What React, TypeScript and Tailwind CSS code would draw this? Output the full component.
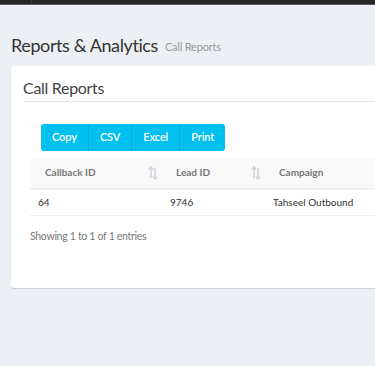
import React from 'react';

const SortIcon: React.FC = () => (
  <svg width="10" height="14" viewBox="0 0 10 14" className="text-gray-300">
    <path d="M3 1v11M0.8 3.5L3 1l2.2 2.5" stroke="currentColor" strokeWidth="1.6" fill="none" />
    <path d="M7 13V2M4.8 10.5L7 13l2.2-2.5" stroke="currentColor" strokeWidth="1.6" fill="none" />
  </svg>
);

const App: React.FC = () => {
  const buttons = ['Copy', 'CSV', 'Excel', 'Print'];

  return (
    <div className="w-[375px] h-[366px] overflow-hidden bg-[#ecf0f5] font-['Lato',sans-serif]">
      <div className="h-[5px] bg-[#262626] border-b border-[#5c5c5c] flex">
        <div className="w-[32px] border-r border-[#3a3a3a]" />
      </div>

      <div className="pl-[11px] pt-[28px] flex items-end gap-[7px]">
        <h1 className="text-[18px] leading-[24px] tracking-[-0.4px] text-[#333]">Reports &amp; Analytics</h1>
        <span className="text-[11px] leading-[20px] tracking-[-0.2px] text-[#999]">Call Reports</span>
      </div>

      <div className="ml-[11px] mt-[9px] w-[420px] h-[222px] bg-white rounded-[3px] shadow-[0_1px_1px_rgba(0,0,0,0.15)]">
        <div className="mx-[12px] pt-[11px] pb-[3px] border-b border-[#e5e5e5]">
          <h3 className="text-[16px] leading-[21px] tracking-[-0.3px] text-[#444]">Call Reports</h3>
        </div>

        <div className="pl-[19px] pr-0 pt-[21px]">
          <div className="ml-[11px] inline-flex rounded-[3px] overflow-hidden bg-[#00c0ef]">
            {buttons.map((b, i) => (
              <button
                key={b}
                className={`h-[27px] px-[11px] text-[11px] tracking-[-0.1px] font-semibold text-white ${i > 0 ? 'border-l border-[#00acd6]' : ''}`}
              >
                {b}
              </button>
            ))}
          </div>

          <table className="mt-[7px] w-[400px] text-left text-[10px]">
            <thead>
              <tr className="bg-[#f9f9f9] border-b-2 border-[#f0f0f0]">
                <th className="w-[132px] h-[31px] pl-[15px] font-bold text-[#777]">
                  <div className="flex items-center justify-between pr-[4px]">
                    <span>Callback ID</span>
                    <SortIcon />
                  </div>
                </th>
                <th className="w-[103px] pl-[14px] font-bold text-[#777]">
                  <div className="flex items-center justify-between pr-[4px]">
                    <span>Lead ID</span>
                    <SortIcon />
                  </div>
                </th>
                <th className="pl-[14px] font-bold text-[#777]">Campaign</th>
              </tr>
            </thead>
            <tbody>
              <tr className="border-b border-[#f0f0f0]">
                <td className="h-[27px] pl-[8px] text-[#333]">64</td>
                <td className="pl-[8px] text-[#333]">9746</td>
                <td className="pl-[8px] text-[#333]">Tahseel Outbound</td>
              </tr>
            </tbody>
          </table>

          <div className="pt-[13px] text-[10.5px] tracking-[-0.3px] text-[#777]">Showing 1 to 1 of 1 entries</div>
        </div>
      </div>
    </div>
  );
};

export default App;
